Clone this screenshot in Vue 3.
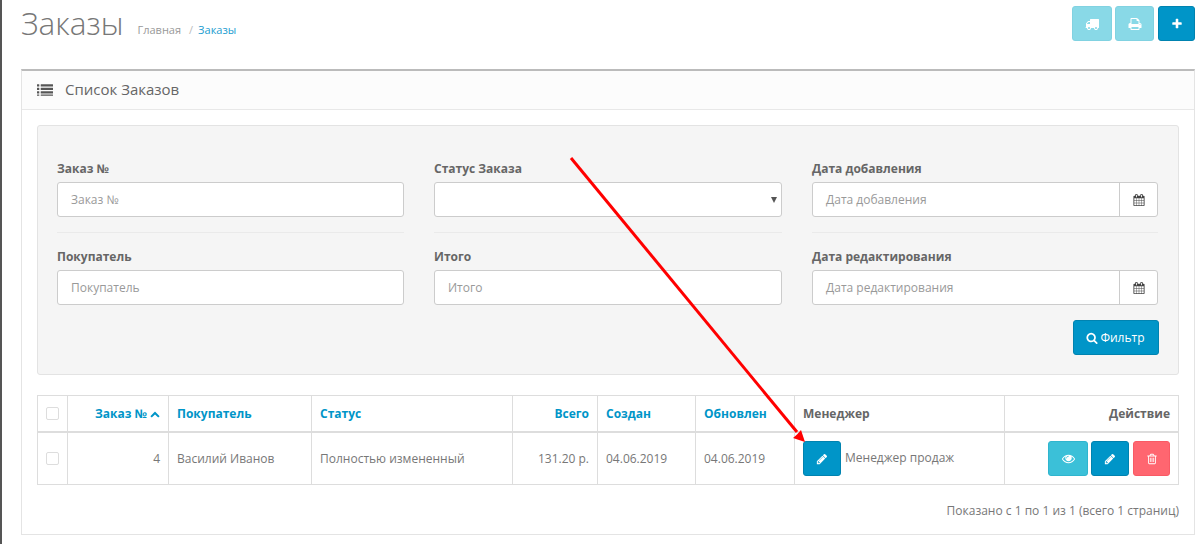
<script setup>
const icons = {
  truck: 'M640 1408q0-52-38-90t-90-38-90 38-38 90 38 90 90 38 90-38 38-90zm-384-512h384v-256h-158q-13 0-22 9l-195 195q-9 9-9 22v30zm1280 512q0-52-38-90t-90-38-90 38-38 90 38 90 90 38 90-38 38-90zm256-1088v1024q0 15-4 26.500t-13.500 18.500-16.500 11.500-23.500 6-22.500 2-25.500 0-22.500-.5q0 106-75 181t-181 75-181-75-75-181h-384q0 106-75 181t-181 75-181-75-75-181h-64q-3 0-22.500.5t-25.500 0-22.500-2-23.500-6-16.500-11.500-13.500-18.500-4-26.500q0-26 19-45t45-19v-320q0-8-.5-35t0-38 2.500-34.500 6.500-37 14-30.500 22.500-30l198-198q19-19 50.500-32t58.500-13h160v-192q0-26 19-45t45-19h1024q26 0 45 19t19 45z',
  print: 'M448 1536h896v-256h-896v256zm0-640h896v-384h-160q-40 0-68-28t-28-68v-160h-640v640zm1152 64q0-26-19-45t-45-19-45 19-19 45 19 45 45 19 45-19 19-45zm128 0v416q0 13-9.500 22.500t-22.500 9.500h-224v160q0 40-28 68t-68 28h-960q-40 0-68-28t-28-68v-160h-224q-13 0-22.500-9.500t-9.500-22.500v-416q0-79 56.500-135.500t135.500-56.500h64v-544q0-40 28-68t68-28h672q40 0 88 20t76 48l152 152q28 28 48 76t20 88v256h64q79 0 135.500 56.500t56.500 135.500z',
  plus: 'M1600 736v192q0 40-28 68t-68 28h-416v416q0 40-28 68t-68 28h-192q-40 0-68-28t-28-68v-416h-416q-40 0-68-28t-28-68v-192q0-40 28-68t68-28h416v-416q0-40 28-68t68-28h192q40 0 68 28t28 68v416h416q40 0 68 28t28 68z',
  list: 'M32 256h192q32 0 32 32v192q0 32-32 32h-192q-32 0-32-32v-192q0-32 32-32zm0 384h192q32 0 32 32v192q0 32-32 32h-192q-32 0-32-32v-192q0-32 32-32zm0 384h192q32 0 32 32v192q0 32-32 32h-192q-32 0-32-32v-192q0-32 32-32zm0 384h192q32 0 32 32v64q0 32-32 32h-192q-32 0-32-32v-64q0-32 32-32zm416-1152h1312q32 0 32 32v192q0 32-32 32h-1312q-32 0-32-32v-192q0-32 32-32zm0 384h1312q32 0 32 32v192q0 32-32 32h-1312q-32 0-32-32v-192q0-32 32-32zm0 384h1312q32 0 32 32v192q0 32-32 32h-1312q-32 0-32-32v-192q0-32 32-32zm0 384h1312q32 0 32 32v64q0 32-32 32h-1312q-32 0-32-32v-64q0-32 32-32z',
  calendar: 'M192 1664h288v-288h-288v288zm352 0h320v-288h-320v288zm-352-352h288v-320h-288v320zm352 0h320v-320h-320v320zm-352-384h288v-288h-288v288zm736 736h320v-288h-320v288zm-384-736h320v-288h-320v288zm768 736h288v-288h-288v288zm-384-352h320v-320h-320v320zm-352-864v-288q0-13-9.500-22.500t-22.500-9.500h-64q-13 0-22.500 9.500t-9.500 22.500v288q0 13 9.500 22.500t22.500 9.500h64q13 0 22.500-9.500t9.500-22.500zm736 864h288v-320h-288v320zm-384-384h320v-288h-320v288zm384 0h288v-288h-288v288zm32-480v-288q0-13-9.500-22.500t-22.500-9.500h-64q-13 0-22.500 9.500t-9.500 22.500v288q0 13 9.500 22.500t22.500 9.500h64q13 0 22.500-9.500t9.500-22.500zm384-64v1280q0 52-38 90t-90 38h-1408q-52 0-90-38t-38-90v-1280q0-52 38-90t90-38h128v-96q0-66 47-113t113-47h64q66 0 113 47t47 113v96h384v-96q0-66 47-113t113-47h64q66 0 113 47t47 113v96h128q52 0 90 38t38 90z',
  search: 'M1216 832q0-185-131.500-316.500t-316.500-131.500-316.500 131.500-131.500 316.500 131.500 316.500 316.500 131.500 316.500-131.500 131.500-316.500zm512 832q0 52-38 90t-90 38q-54 0-90-38l-343-342q-179 124-399 124-143 0-273.500-55.500t-225-150-150-225-55.500-273.500 55.500-273.500 150-225 225-150 273.500-55.500 273.500 55.500 225 150 150 225 55.500 273.500q0 220-124 399l343 343q37 37 37 90z',
  pencil: 'M491 1536l91-91-235-235-91 91v107h128v128h107zm523-928q0-22-22-22-10 0-17 7l-542 542q-7 7-7 17 0 22 22 22 10 0 17-7l542-542q7-7 7-17zm-54-192l416 416-832 832h-416v-416zm683 96q0 53-37 90l-166 166-416-416 166-165q36-38 90-38 53 0 91 38l235 234q37 39 37 91z',
  eye: 'M1664 960q-152-236-381-353 61 104 61 225 0 185-131.500 316.500t-316.500 131.500-316.500-131.500-131.500-316.500q0-121 61-225-229 117-381 353 133 205 333.500 326.500t434.500 121.500 434.500-121.500 333.500-326.500zm-720-384q0-20-14-34t-34-14q-125 0-214.500 89.500t-89.500 214.500q0 20 14 34t34 14 34-14 14-34q0-86 61-147t147-61q20 0 34-14t14-34zm848 384q0 34-20 69-140 230-376.500 368.500t-499.500 138.500-499.500-139-376.500-368q-20-35-20-69t20-69q140-229 376.500-368t499.500-139 499.500 139 376.500 368q20 35 20 69z',
  trash: 'M704 736v576q0 14-9 23t-23 9h-64q-14 0-23-9t-9-23v-576q0-14 9-23t23-9h64q14 0 23 9t9 23zm256 0v576q0 14-9 23t-23 9h-64q-14 0-23-9t-9-23v-576q0-14 9-23t23-9h64q14 0 23 9t9 23zm256 0v576q0 14-9 23t-23 9h-64q-14 0-23-9t-9-23v-576q0-14 9-23t23-9h64q14 0 23 9t9 23zm128 724v-948h-896v948q0 22 7 40.500t14.500 27 10.500 8.500h832q3 0 10.500-8.500t14.500-27 7-40.500zm-672-1076h448l-48-117q-7-9-17-11h-317q-10 2-17 11zm928 32v64q0 14-9 23t-23 9h-96v948q0 83-47 143.500t-113 60.500h-832q-66 0-113-58.500t-47-141.500v-952h-96q-14 0-23-9t-9-23v-64q0-14 9-23t23-9h309l70-167q15-37 54-63t79-26h320q40 0 79 26t54 63l70 167h309q14 0 23 9t9 23z',
  up: 'M1683 1331l-166 165q-19 19-45 19t-45-19l-531-531-531 531q-19 19-45 19t-45-19l-166-165q-19-19-19-45.500t19-45.500l742-741q19-19 45-19t45 19l742 741q19 19 19 45.500t-19 45.500z'
}

const filters = [
  { label: 'Заказ №', placeholder: 'Заказ №' },
  { label: 'Статус Заказа', select: true },
  { label: 'Дата добавления', placeholder: 'Дата добавления', date: true },
  { label: 'Покупатель', placeholder: 'Покупатель' },
  { label: 'Итого', placeholder: 'Итого' },
  { label: 'Дата редактирования', placeholder: 'Дата редактирования', date: true }
]
</script>

<template>
  <div class="page">
    <header class="page-header">
      <div class="crumbs">
        <h1>Заказы</h1>
        <span class="crumb">Главная</span>
        <span class="sep">/</span>
        <span class="crumb active">Заказы</span>
      </div>
      <div class="top-actions">
        <button class="btn info faded tb1"><svg viewBox="0 0 1792 1792" width="14" height="14"><path :d="icons.truck" /></svg></button>
        <button class="btn info faded tb2"><svg viewBox="0 0 1792 1792" width="14" height="14"><path :d="icons.print" /></svg></button>
        <button class="btn primary tb3"><svg viewBox="0 0 1792 1792" width="12" height="12"><path :d="icons.plus" /></svg></button>
      </div>
    </header>

    <section class="panel">
      <div class="panel-heading">
        <svg class="list-icon" viewBox="0 0 1792 1792" width="16" height="16"><path :d="icons.list" /></svg>
        <span>Список Заказов</span>
      </div>
      <div class="panel-body">
        <div class="well">
          <div class="filters">
            <div v-for="f in filters" :key="f.label" class="field">
              <label>{{ f.label }}</label>
              <div v-if="f.select" class="control select"><span class="caret"></span></div>
              <div v-else class="control">
                <span class="ph">{{ f.placeholder }}</span>
                <span v-if="f.date" class="addon">
                  <svg viewBox="0 0 1792 1792" width="12" height="12"><path :d="icons.calendar" /></svg>
                </span>
              </div>
            </div>
          </div>
          <div class="filter-row">
            <button class="btn primary filter-btn">
              <svg viewBox="0 0 1792 1792" width="12" height="12"><path :d="icons.search" /></svg>
              Фильтр
            </button>
          </div>
        </div>

        <table>
          <colgroup>
            <col style="width: 30px" />
            <col style="width: 101px" />
            <col style="width: 143px" />
            <col style="width: 201px" />
            <col style="width: 85px" />
            <col style="width: 98px" />
            <col style="width: 99px" />
            <col style="width: 210px" />
            <col />
          </colgroup>
          <thead>
            <tr>
              <th class="check"><span class="box"></span></th>
              <th class="right link">Заказ № <svg class="sort" viewBox="0 0 1792 1792" width="10" height="10"><path :d="icons.up" /></svg></th>
              <th class="link">Покупатель</th>
              <th class="link">Статус</th>
              <th class="right link">Всего</th>
              <th class="link">Создан</th>
              <th class="link">Обновлен</th>
              <th>Менеджер</th>
              <th class="right">Действие</th>
            </tr>
          </thead>
          <tbody>
            <tr>
              <td class="check"><span class="box"></span></td>
              <td class="right">4</td>
              <td>Василий Иванов</td>
              <td>Полностью измененный</td>
              <td class="right">131.20 р.</td>
              <td>04.06.2019</td>
              <td>04.06.2019</td>
              <td>
                <div class="manager">
                  <button class="btn primary row-btn"><svg viewBox="0 0 1792 1792" width="12" height="12"><path :d="icons.pencil" /></svg></button>
                  <span class="manager-name">Менеджер продаж</span>
                </div>
              </td>
              <td>
                <div class="row-actions">
                  <button class="btn info view"><svg viewBox="0 0 1792 1792" width="13" height="13"><path :d="icons.eye" /></svg></button>
                  <button class="btn primary row-btn"><svg viewBox="0 0 1792 1792" width="12" height="12"><path :d="icons.pencil" /></svg></button>
                  <button class="btn danger del"><svg viewBox="0 0 1792 1792" width="12" height="12"><path :d="icons.trash" /></svg></button>
                </div>
              </td>
            </tr>
          </tbody>
        </table>

        <p class="summary">Показано с 1 по 1 из 1 (всего 1 страниц)</p>
      </div>
    </section>

    <svg class="arrow" width="1202" height="544" viewBox="0 0 1202 544">
      <line x1="571" y1="158" x2="797" y2="432" stroke="#ff0000" stroke-width="3" />
      <polygon points="805,442 793,438 797,434.500 801,430" fill="#ff0000" />
    </svg>
  </div>
</template>

<style>
html, body { margin: 0; background: #fff; }
</style>

<style scoped>
.page {
  position: relative;
  box-sizing: border-box;
  width: 1202px;
  height: 544px;
  overflow: hidden;
  padding: 0 7px 0 19px;
  border-left: 2px solid #555;
  font-family: "Open Sans", sans-serif;
  font-size: 12px;
  color: #777;
}
.page-header {
  display: flex;
  justify-content: space-between;
  height: 69px;
}
.crumbs { display: flex; align-items: flex-start; height: 50px; }
h1 {
  margin: 3px 14px 0 0;
  font-size: 31.500px;
  font-weight: 300;
  line-height: 40px;
  color: #777;
}
.crumb, .sep { margin-top: 22px; font-size: 11px; line-height: 16px; }
.crumb { color: #999; }
.crumb.active { color: #1b9dd0; }
.sep { margin-left: 8px; margin-right: 5px; color: #bbb; }
.top-actions { display: flex; gap: 3px; margin-top: 6px; height: 35px; }
.btn {
  display: inline-flex;
  align-items: center;
  justify-content: center;
  box-sizing: border-box;
  padding: 0;
  border: 1px solid transparent;
  border-radius: 3px;
  font-family: inherit;
  font-size: 12px;
  color: #fff;
}
.btn svg { fill: #fff; }
.primary { background: #0095c8; border-color: #0083b0; }
.info { background: #3bc0d8; border-color: #2fb5ce; }
.danger { background: #ff6670; border-color: #f95a65; }
.faded { opacity: 0.6; }
.tb1 { width: 40px; }
.tb2 { width: 39px; }
.tb3 { width: 37px; margin-left: 1px; }

.panel {
  box-sizing: border-box;
  height: 466px;
  border: 1px solid #e4e4e4;
  border-top: 2px solid #bbb;
}
.panel-heading {
  display: flex;
  align-items: center;
  box-sizing: border-box;
  height: 39px;
  padding: 0 0 3px 15px;
  background: #fcfcfc;
  border-bottom: 1px solid #e8e8e8;
  font-size: 15px;
  color: #666;
}
.list-icon { fill: #555; margin: 2px 12px 0 0; }
.panel-body { padding: 15px 15px 0; }
.well {
  box-sizing: border-box;
  height: 250px;
  padding: 33px 20px 0 19px;
  background: #f5f5f5;
  border: 1px solid #e3e3e3;
  border-radius: 3px;
}
.filters {
  display: grid;
  grid-template-columns: 347px 348px 346px;
  column-gap: 30px;
  row-gap: 30px;
}
.field { position: relative; }
.field label {
  display: block;
  height: 20px;
  margin-bottom: 3px;
  font-weight: 700;
  font-size: 12px;
  line-height: 20px;
  color: #666;
}
.field:nth-child(-n+3)::after {
  content: "";
  position: absolute;
  left: 0;
  right: 0;
  bottom: -16px;
  border-top: 1px solid #eaeaea;
}
.control {
  display: flex;
  align-items: center;
  box-sizing: border-box;
  height: 35px;
  background: #fff;
  border: 1px solid #ccc;
  border-radius: 3px;
  padding-left: 13px;
}
.ph { flex: 1; color: #999; }
.addon {
  display: flex;
  align-items: center;
  justify-content: center;
  box-sizing: border-box;
  width: 38px;
  height: 100%;
  border-left: 1px solid #ccc;
}
.addon svg { fill: #444; }
.select { justify-content: flex-end; padding-right: 4px; }
.caret {
  width: 0;
  height: 0;
  border-left: 3px solid transparent;
  border-right: 3px solid transparent;
  border-top: 6px solid #555;
}
.filter-row { display: flex; justify-content: flex-end; margin: 15px -1px 0 0; }
.filter-btn { width: 86px; height: 35px; gap: 2px; padding-right: 1px; }

table {
  width: 1142px;
  margin-top: 20px;
  border-collapse: collapse;
  table-layout: fixed;
}
th, td {
  padding: 0 8px;
  border: 1px solid #ddd;
  text-align: left;
  color: #777;
  font-size: 12px;
}
th { height: 35px; font-weight: 700; color: #666; border-bottom: 2px solid #ddd; }
td { height: 51px; }
.right { text-align: right; }
th.link { color: #0095c8; }
.sort { fill: #0095c8; vertical-align: -1px; }
.check { padding: 0 0 0 8px; }
.box {
  display: block;
  box-sizing: border-box;
  width: 13px;
  height: 13px;
  background: #fff;
  border: 1px solid #ddd;
  border-radius: 2px;
}
.manager { display: flex; align-items: center; gap: 4px; }
.manager-name { margin-top: -3px; }
.row-actions { display: flex; justify-content: flex-end; gap: 3px; }
.row-btn { width: 38px; height: 35px; }
.view { width: 40px; height: 35px; }
.del { width: 37px; height: 35px; margin-left: 1px; }
.summary { margin: 17px 0 0; text-align: right; }

.arrow { position: absolute; left: -2px; top: 0; pointer-events: none; }
</style>
